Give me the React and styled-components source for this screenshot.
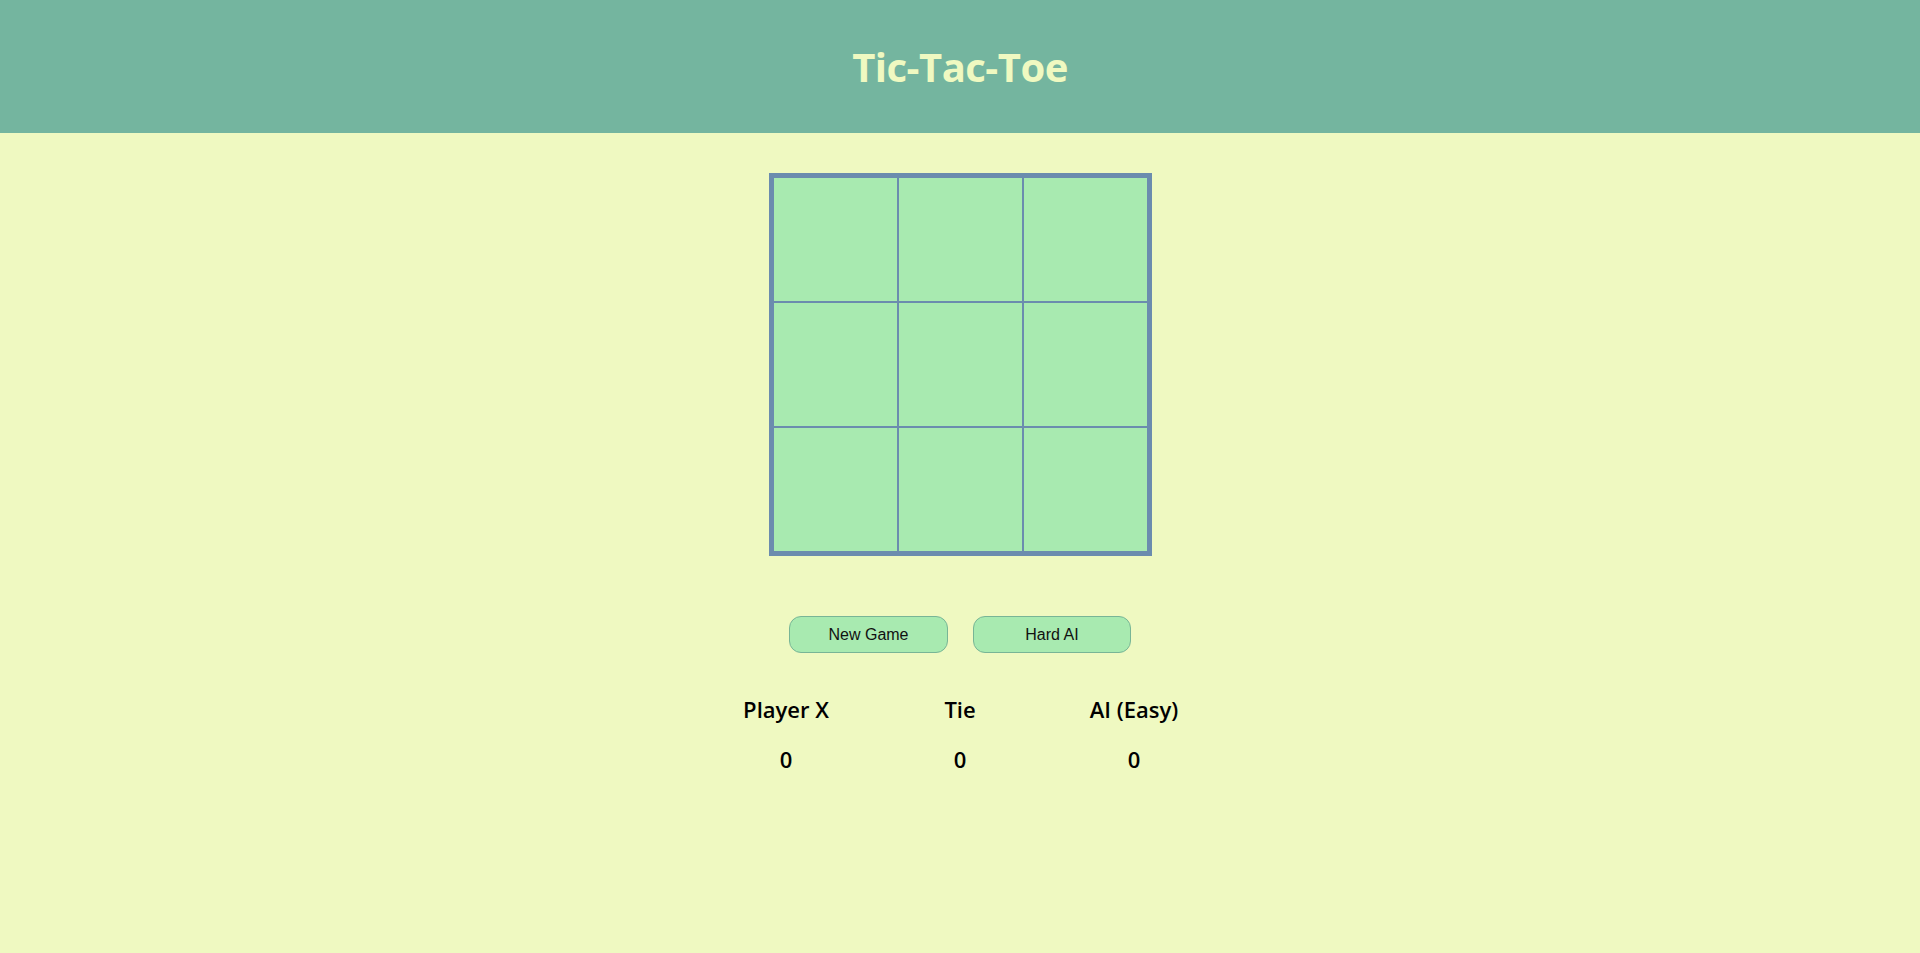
import React from 'react';
import styled, { createGlobalStyle } from 'styled-components';

const GlobalStyle = createGlobalStyle`
  html, body {
    margin: 0;
    padding: 0;
    background: #eff9c1;
  }
  body {
    font-family: "Open Sans", "Noto Sans", sans-serif;
  }
`;

const Page = styled.div`
  min-height: 953px;
  background: #eff9c1;
  display: flex;
  flex-direction: column;
  align-items: center;
`;

const Header = styled.header`
  width: 100%;
  height: 133px;
  background: #74b59f;
  display: flex;
  align-items: center;
  justify-content: center;
`;

const Title = styled.h1`
  margin: 0;
  font-size: 40px;
  font-weight: 700;
  color: #eff9c1;
  letter-spacing: -0.5px;
`;

const Board = styled.div`
  margin-top: 40px;
  display: grid;
  grid-template-columns: repeat(3, 125px);
  grid-template-rows: repeat(3, 125px);
  border: 4px solid #6b8cae;
`;

const Cell = styled.button`
  box-sizing: border-box;
  width: 125px;
  height: 125px;
  padding: 0;
  margin: 0;
  background: #a8eab0;
  border: 1px solid #6b8cae;
  cursor: pointer;
`;

const Controls = styled.div`
  margin-top: 60px;
  display: flex;
  gap: 25px;
`;

const Button = styled.button`
  width: ${(p) => p.w}px;
  height: 37px;
  background: #a8eab0;
  border: 1px solid #78b596;
  border-radius: 12px;
  font-family: "Liberation Sans", Arial, sans-serif;
  font-size: 16px;
  color: #111;
  cursor: pointer;
`;

const Scores = styled.div`
  margin-top: 40px;
  display: grid;
  grid-template-columns: repeat(3, 174px);
  justify-items: center;
`;

const Score = styled.div`
  display: flex;
  flex-direction: column;
  align-items: center;
  gap: 18px;
  color: #000;
`;

const Label = styled.div`
  font-size: 22px;
  font-weight: 600;
  line-height: 32px;
`;

const Value = styled.div`
  font-size: 22px;
  font-weight: 600;
  line-height: 32px;
`;

const scores = [
  { label: 'Player X', value: 0 },
  { label: 'Tie', value: 0 },
  { label: 'AI (Easy)', value: 0 },
];

const App = () => {
  return (
    <>
      <GlobalStyle />
      <Page>
        <Header>
          <Title>Tic-Tac-Toe</Title>
        </Header>
        <Board>
          {Array.from({ length: 9 }).map((_, i) => (
            <Cell key={i} aria-label={`cell ${i + 1}`} />
          ))}
        </Board>
        <Controls>
          <Button w={159}>New Game</Button>
          <Button w={158}>Hard AI</Button>
        </Controls>
        <Scores>
          {scores.map((s) => (
            <Score key={s.label}>
              <Label>{s.label}</Label>
              <Value>{s.value}</Value>
            </Score>
          ))}
        </Scores>
      </Page>
    </>
  );
};

export default App;
